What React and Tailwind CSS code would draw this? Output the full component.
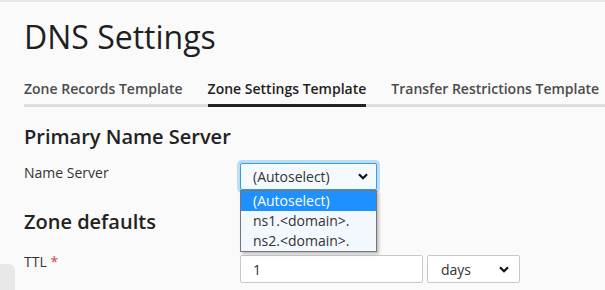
import React from "react";

function Chevron({ className = "" }) {
  return (
    <svg width="10" height="7" viewBox="0 0 10 7" className={className}>
      <path d="M1 1.2 L5 5.2 L9 1.2" fill="none" stroke="#111" strokeWidth="2.2" />
    </svg>
  );
}

export default function App() {
  return (
    <div
      className="relative w-[605px] h-[290px] overflow-hidden bg-[#fafafa] border-t-2 border-[#e6e6e6] text-[#222]"
      style={{ fontFamily: '"Open Sans", sans-serif' }}
    >
      <div className="pl-6">
        <h1 className="text-[32px] leading-[44px] mt-[13px] font-normal text-[#1f1f1f]">DNS Settings</h1>
        <div className="mt-[20px] flex gap-[25px] border-b-[3px] border-[#dedede] text-[14px] font-semibold leading-[20px]">
          <div className="pb-[5px] text-[#4b4b4b]">Zone Records Template</div>
          <div className="pb-[5px] text-[#1f1f1f] relative">
            Zone Settings Template
            <div className="absolute left-0 right-0 -bottom-[3px] h-[3px] bg-[#222]" />
          </div>
          <div className="pb-[5px] text-[#4b4b4b] whitespace-nowrap">Transfer Restrictions Template</div>
        </div>
        <h2 className="mt-[16px] text-[20px] leading-[28px] font-semibold text-[#222]">Primary Name Server</h2>
        <div className="mt-[12px] flex items-start">
          <div className="w-[216px] text-[14px] leading-[20px] text-[#333]">Name Server</div>
          <div className="relative">
            <div className="w-[137px] h-[27px] border border-[#3b9be0] rounded-[2px] bg-[#f4faff] ring-[3px] ring-[#b9dcf7] flex items-center pl-[12px] pr-[8px] text-[14px] text-[#333]">
              <span className="flex-1">(Autoselect)</span>
              <Chevron />
            </div>
            <div className="absolute left-0 top-[27px] w-[137px] border border-[#767676] bg-[#f2f8fd] text-[14px] leading-[20px] text-[#333] z-10 shadow-[2px_2px_3px_rgba(0,0,0,0.25)]">
              <div className="bg-[#1e90ff] text-white px-[12px]">(Autoselect)</div>
              <div className="px-[12px]">ns1.&lt;domain&gt;.</div>
              <div className="px-[12px]">ns2.&lt;domain&gt;.</div>
            </div>
          </div>
        </div>
        <h2 className="mt-[18px] text-[20px] leading-[28px] font-semibold text-[#222]">Zone defaults</h2>
        <div className="mt-[16px] flex items-start">
          <div className="w-[216px] text-[14px] leading-[20px] text-[#333]">
            TTL <span className="text-[#d3405c]">*</span>
          </div>
          <div className="mt-[3px] w-[183px] h-[28px] border border-[#c8c8c8] rounded-[2px] bg-white flex items-center pl-[12px] text-[14px] text-[#333]">1</div>
          <div className="mt-[3px] ml-[4px] w-[93px] h-[28px] border border-[#c8c8c8] rounded-[2px] bg-white flex items-center pl-[13px] pr-[10px] text-[14px] text-[#333]">
            <span className="flex-1">days</span>
            <Chevron />
          </div>
        </div>
      </div>
      <div className="absolute left-0 top-[262px] w-[15px] h-[30px] bg-[#e8e8e8] rounded-tr-[6px]" />
    </div>
  );
}
